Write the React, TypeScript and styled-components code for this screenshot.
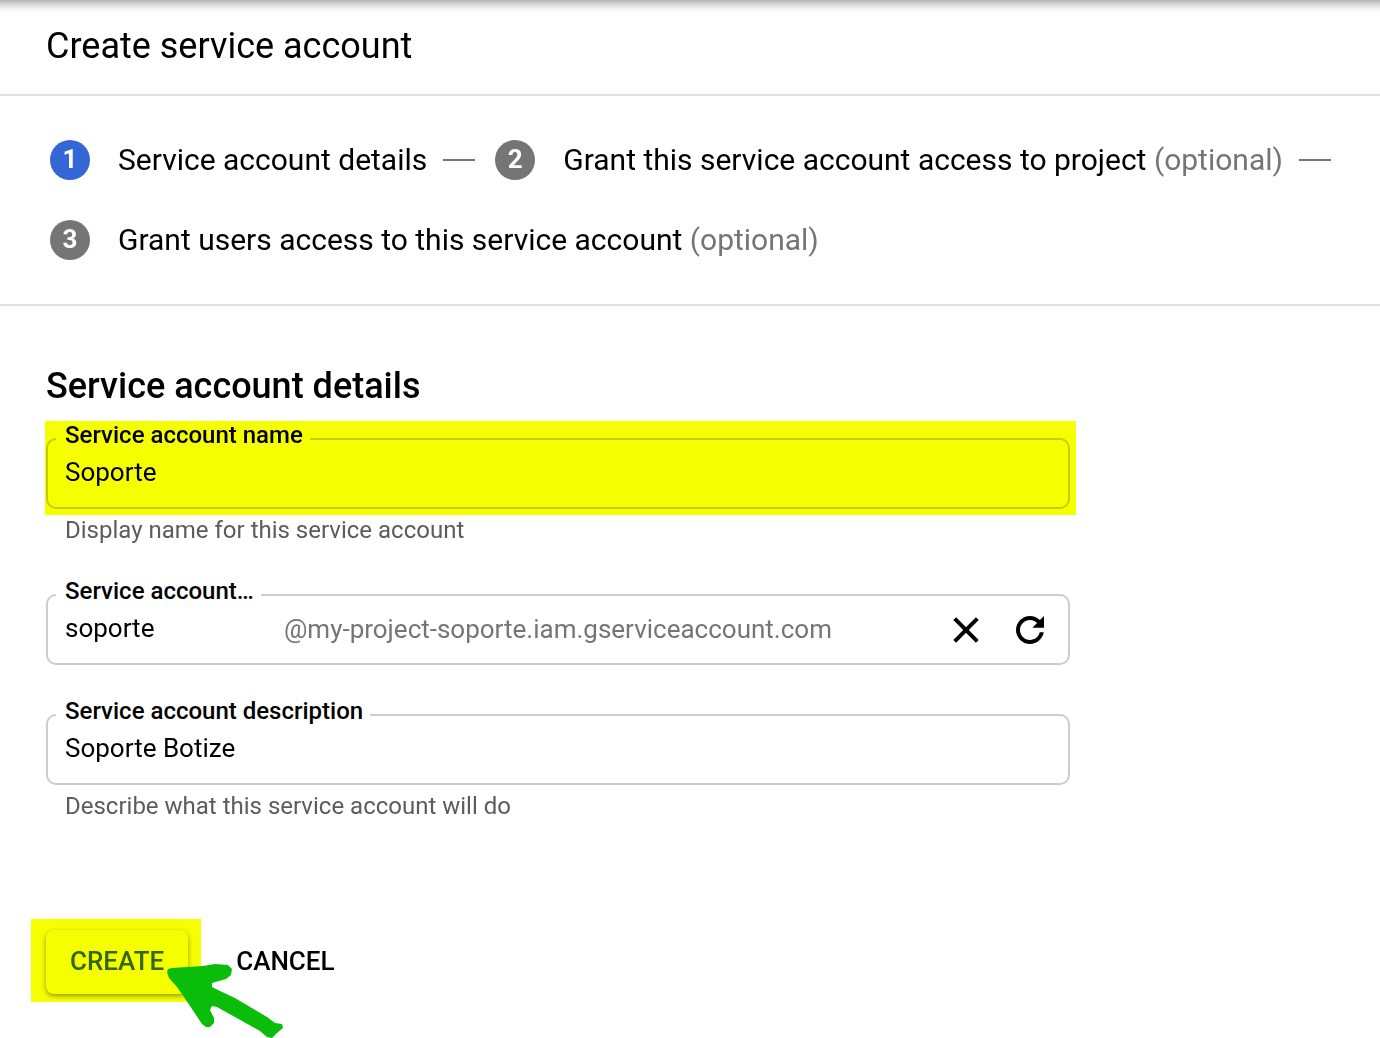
import React, { useState } from "react";
import styled, { createGlobalStyle, css } from "styled-components";

const GlobalStyle = createGlobalStyle`
  *, *::before, *::after { box-sizing: border-box; }
  body {
    margin: 0;
    background: #fff;
    color: #000;
    font-family: Roboto, "Liberation Sans", sans-serif;
  }
`;

const highlight = "#f6ff00";

const Page = styled.div`
  min-height: 100vh;
  background: #fff;
`;

const Header = styled.header`
  padding: 24px 46px 26px;
  border-bottom: 2px solid #e0e0e0;
  background: linear-gradient(#b2b2b2, #d6d6d6 4px, #f4f4f4 9px, #fff 13px);
`;

const PageTitle = styled.h1`
  margin: 0;
  font-size: 36px;
  font-weight: 400;
  line-height: 44px;
`;

const Steps = styled.ol`
  display: flex;
  flex-wrap: wrap;
  column-gap: 20px;
  margin: 0;
  padding: 24px 30px 24px 50px;
  border-bottom: 2px solid #e0e0e0;
  list-style: none;
`;

const Step = styled.li`
  display: flex;
  align-items: center;
  height: 80px;
  font-size: 30px;
  line-height: 40px;
  white-space: nowrap;
`;

const StepNumber = styled.span<{ $active?: boolean }>`
  display: flex;
  align-items: center;
  justify-content: center;
  width: 40px;
  height: 40px;
  margin-right: 28px;
  padding-bottom: 2px;
  border-radius: 50%;
  background: ${(p) => (p.$active ? "#3367d6" : "#757575")};
  color: #fff;
  font-size: 26px;
  font-weight: 700;
`;

const Optional = styled.span`
  color: #757575;
`;

const StepLine = styled.span`
  width: 32px;
  height: 2px;
  margin-left: 16px;
  background: #757575;
`;

const Form = styled.form`
  padding: 58px 46px 0;
`;

const SectionTitle = styled.h2`
  margin: 0 0 30px;
  font-size: 36px;
  font-weight: 500;
  line-height: 44px;
`;

const Field = styled.div`
  max-width: 1024px;
`;

const FieldBox = styled.div`
  position: relative;
  display: flex;
  align-items: center;
  height: 71px;
  padding: 0 17px;
  border: 2px solid #ccc;
  border-radius: 10px;
`;

const FieldLabel = styled.label`
  position: absolute;
  top: -19px;
  left: 8px;
  padding: 0 7px 0 9px;
  background: #fff;
  font-size: 24px;
  font-weight: 500;
  line-height: 28px;
`;

const TextInput = styled.input<{ $short?: boolean }>`
  flex: ${(p) => (p.$short ? "0 0 219px" : "1")};
  min-width: 0;
  height: 66px;
  padding: 0 0 4px;
  border: 0;
  outline: 0;
  background: transparent;
  color: #000;
  font: 400 26px/32px Roboto, "Liberation Sans", sans-serif;
`;

const Suffix = styled.span`
  flex: 1;
  padding-bottom: 2px;
  color: #757575;
  font-size: 26px;
  line-height: 32px;
`;

const IconButton = styled.button`
  display: flex;
  margin-left: 22px;
  padding: 0;
  border: 0;
  background: none;
  color: #000;
  cursor: pointer;
`;

const Hint = styled.p`
  margin: 0;
  padding: 7px 19px 1px;
  color: #5c5c5c;
  font-size: 24px;
  line-height: 28px;
`;

const FieldList = styled.div`
  display: grid;
  gap: 49px;
`;

const marker = css`
  position: absolute;
  background: ${highlight};
  mix-blend-mode: multiply;
  pointer-events: none;
`;

const FieldMarker = styled.span`
  ${marker}
  inset: -19px -8px -8px -3px;
`;

const Actions = styled.div`
  display: flex;
  align-items: center;
  gap: 24px;
  margin-top: 109px;
`;

const CreateWrap = styled.div`
  position: relative;
`;

const ActionButton = styled.button<{ $raised?: boolean }>`
  height: 64px;
  padding: 0 24px 2px;
  border: 0;
  border-radius: 8px;
  background: #fff;
  color: ${(p) => (p.$raised ? "#3367d6" : "#000")};
  box-shadow: ${(p) => (p.$raised ? "0 2px 5px rgba(0, 0, 0, 0.4)" : "none")};
  font: 500 26px/32px Roboto, "Liberation Sans", sans-serif;
  cursor: pointer;
`;

const CreateMarker = styled.span`
  ${marker}
  inset: -11px -13px -8px -15px;
`;

const Arrow = styled.svg`
  position: absolute;
  z-index: 1;
  top: 34px;
  left: 120px;
  pointer-events: none;
`;

const CloseIcon = () => (
  <svg width="42" height="42" viewBox="0 0 42 42" aria-hidden="true">
    <path d="M9.7 9.7L32.3 32.3M32.3 9.7L9.7 32.3" stroke="currentColor" strokeWidth="4" />
  </svg>
);

const RefreshIcon = () => (
  <svg width="42" height="42" viewBox="0 0 18 18" aria-hidden="true">
    <path
      fill="currentColor"
      d="M9 13.3c-2.37 0-4.3-1.93-4.3-4.3S6.63 4.7 9 4.7c1.18 0 2.25.48 3.03 1.27L10 8h5V3l-1.76 1.76C12.15 3.68 10.66 3 9 3 5.69 3 3.01 5.69 3.01 9S5.69 15 9 15c2.97 0 5.43-2.16 5.9-5h-1.72c-.45 1.9-2.14 3.3-4.18 3.3z"
    />
  </svg>
);

export default function App() {
  const [name, setName] = useState("Soporte");
  const [id, setId] = useState("soporte");
  const [description, setDescription] = useState("Soporte Botize");

  return (
    <Page>
      <GlobalStyle />
      <Header>
        <PageTitle>Create service account</PageTitle>
      </Header>
      <main>
        <Steps>
          <Step>
            <StepNumber $active>1</StepNumber>
            <span>Service account details</span>
            <StepLine />
          </Step>
          <Step>
            <StepNumber>2</StepNumber>
            <span>
              Grant this service account access to project <Optional>(optional)</Optional>
            </span>
            <StepLine />
          </Step>
          <Step>
            <StepNumber>3</StepNumber>
            <span>
              Grant users access to this service account <Optional>(optional)</Optional>
            </span>
          </Step>
        </Steps>
        <Form onSubmit={(e) => e.preventDefault()}>
          <SectionTitle>Service account details</SectionTitle>
          <FieldList>
            <Field>
              <FieldBox>
                <FieldLabel htmlFor="name">Service account name</FieldLabel>
                <TextInput id="name" value={name} onChange={(e) => setName(e.target.value)} />
                <FieldMarker />
              </FieldBox>
              <Hint>Display name for this service account</Hint>
            </Field>
            <Field>
              <FieldBox>
                <FieldLabel htmlFor="account-id">Service account…</FieldLabel>
                <TextInput
                  id="account-id"
                  $short
                  value={id}
                  onChange={(e) => setId(e.target.value)}
                />
                <Suffix>@my-project-soporte.iam.gserviceaccount.com</Suffix>
                <IconButton type="button" aria-label="Clear" onClick={() => setId("")}>
                  <CloseIcon />
                </IconButton>
                <IconButton type="button" aria-label="Refresh" onClick={() => setId("soporte")}>
                  <RefreshIcon />
                </IconButton>
              </FieldBox>
            </Field>
            <Field>
              <FieldBox>
                <FieldLabel htmlFor="description">Service account description</FieldLabel>
                <TextInput
                  id="description"
                  value={description}
                  onChange={(e) => setDescription(e.target.value)}
                />
              </FieldBox>
              <Hint>Describe what this service account will do</Hint>
            </Field>
          </FieldList>
          <Actions>
            <CreateWrap>
              <ActionButton type="submit" $raised>
                CREATE
              </ActionButton>
              <CreateMarker />
              <Arrow width="118" height="74" viewBox="0 0 118 74" aria-hidden="true">
                <path
                  fill="#0bbd0b"
                  d="M1 8L2 5L6 4L37 2L49 0L62 1L66 5L65 11L60 15L46 19V23L54 27L69 34L101 53L109 59L116 60L117 64L111 69L106 74L101 73L94 67L51 43L46 42L44 46L48 54V59L44 63H40L36 60L22 39L11 23L3 14Z"
                />
              </Arrow>
            </CreateWrap>
            <ActionButton type="button">CANCEL</ActionButton>
          </Actions>
        </Form>
      </main>
    </Page>
  );
}
